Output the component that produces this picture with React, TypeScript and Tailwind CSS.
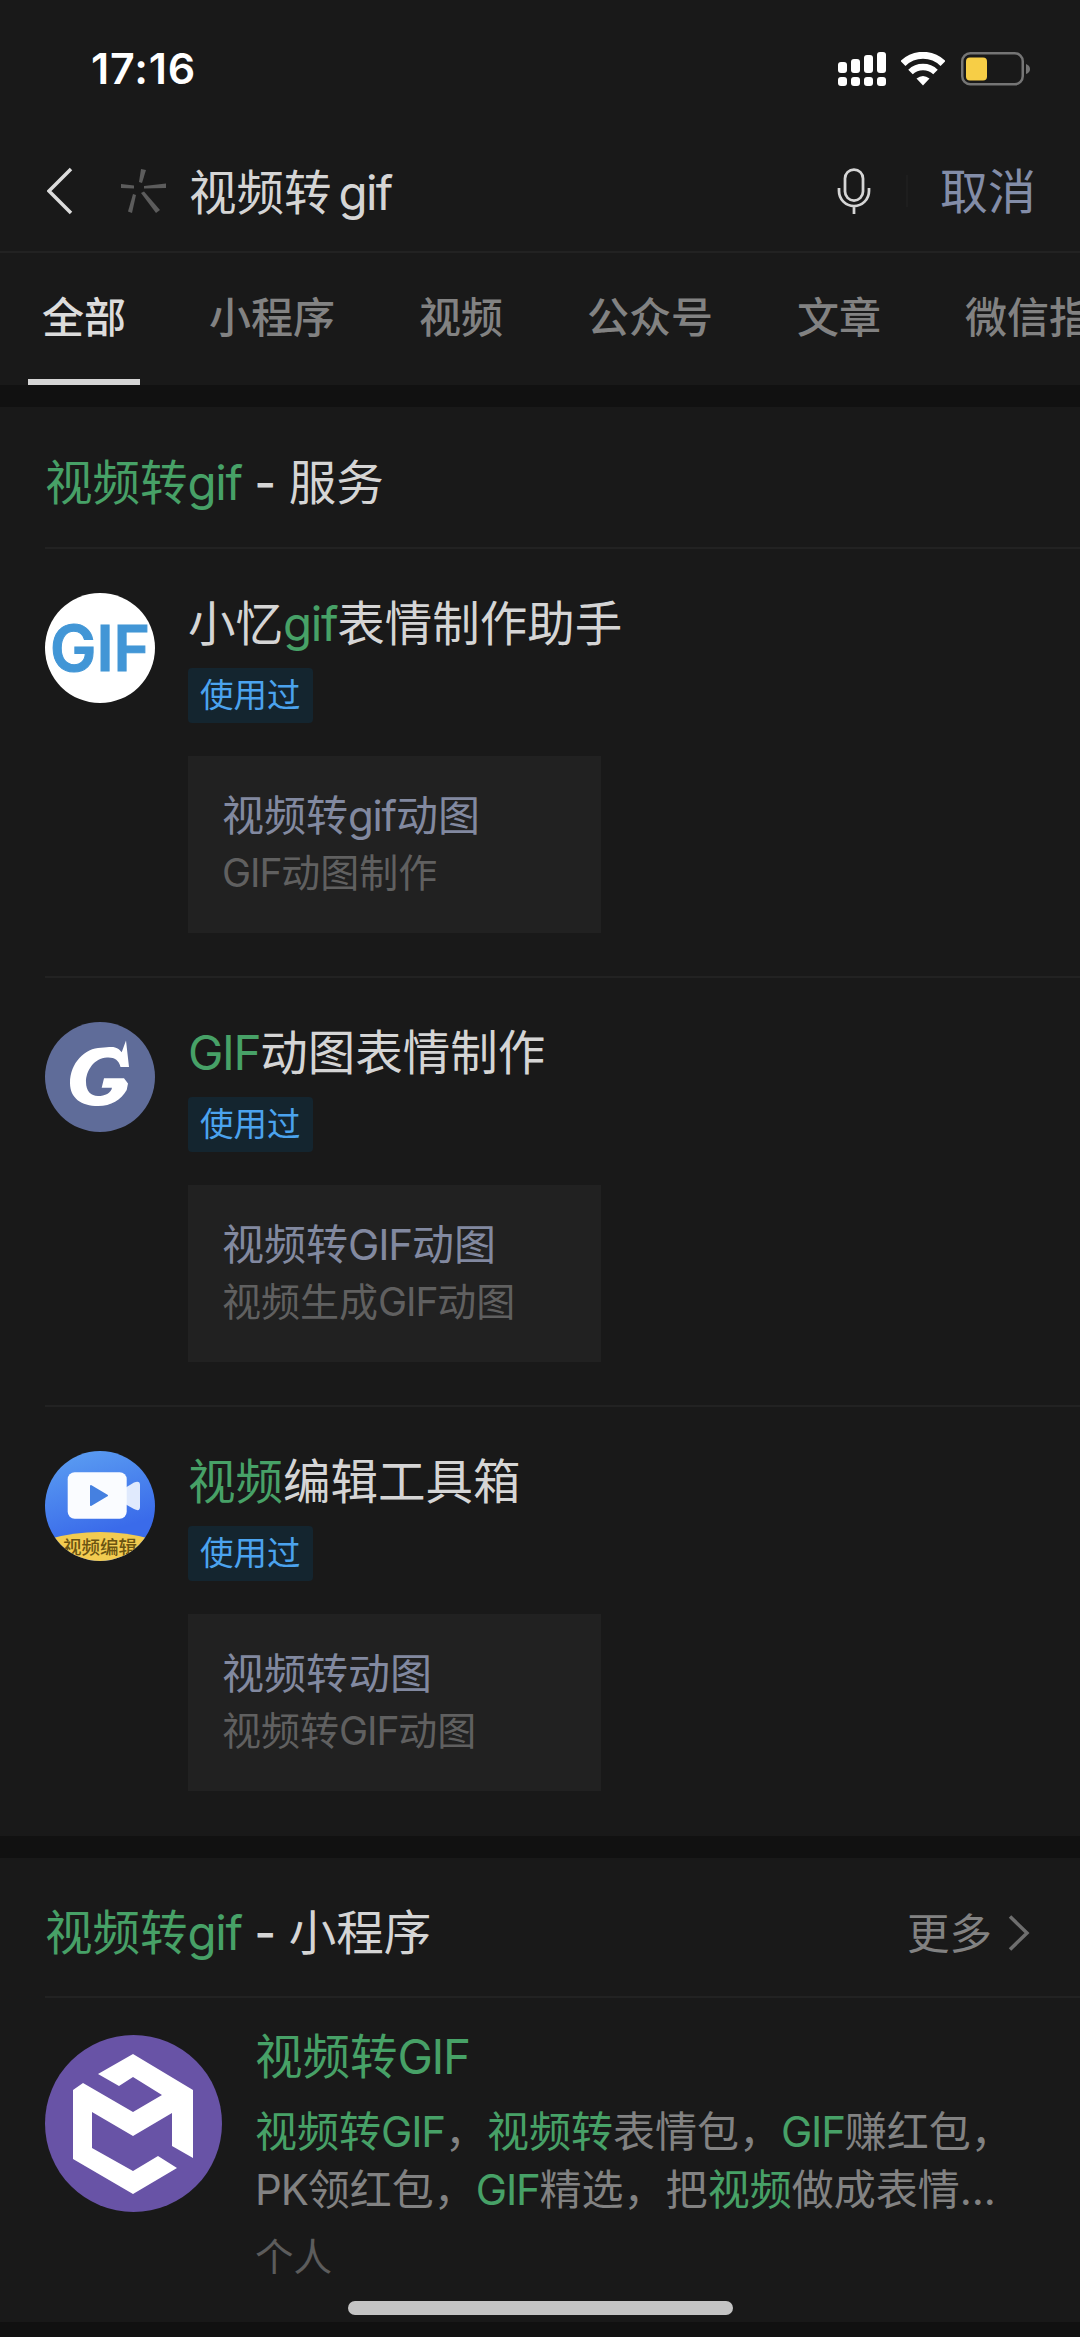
import type { ReactNode } from "react";

type Part = { text: string; hit?: boolean };

type Service = {
  id: string;
  icon: ReactNode;
  title: Part[];
  entry: string;
  entryDesc: string;
};

function GifIcon() {
  return (
    <svg viewBox="0 0 110 110" className="h-[110px] w-[110px] shrink-0">
      <circle cx="55" cy="55" r="55" fill="#fff" />
      <text x="55" y="77.500" textAnchor="middle" textLength="100" lengthAdjust="spacingAndGlyphs" fontSize="63" fontWeight="600" fill="#4296d6" stroke="#4296d6" fontFamily="Inter, sans-serif">
        GIF
      </text>
    </svg>
  );
}

function GIcon() {
  return (
    <svg viewBox="0 0 110 110" className="h-[110px] w-[110px] shrink-0">
      <circle cx="55" cy="55" r="55" fill="#5f6c99" />
      <path d="M81 18.500 L84 45 L75.500 45 C74 38 69 35 62 35.500 C49 36 41 49 41 60 C41 69 46 74 53 74 C60 74 66 71 67 65.700 L56.700 65.700 L59 56.300 L79 56.300 L83 61.500 L81.700 68 C76 78 66 84 53.300 84 C36 84 25 76 25 61 C25 41 40 25.700 56 25.700 C62 25.700 66 24.500 70 25.500 C73 26 75 28 76.700 30.300 Z" fill="#fff" />
    </svg>
  );
}

function VideoIcon() {
  return (
    <svg viewBox="0 0 110 110" className="h-[110px] w-[110px] shrink-0">
      <defs>
        <linearGradient id="sky" x1="0.1" y1="0" x2="0.4" y2="1">
          <stop offset="0" stopColor="#5c9ff2" />
          <stop offset="0.8" stopColor="#3a6bea" />
        </linearGradient>
        <clipPath id="round">
          <circle cx="55" cy="55" r="55" />
        </clipPath>
      </defs>
      <g clipPath="url(#round)">
        <rect width="110" height="110" fill="url(#sky)" />
        <path d="M0 89 Q55 73 110 89 V110 H0 Z" fill="#f2cb50" />
        <path d="M80 37 L89 31.500 Q95 29 95 34 V56 Q95 61 89 58 L80 53 Z" fill="#e0eafd" />
        <rect x="22.700" y="21.300" width="59" height="46.400" rx="7" fill="#fafcff" />
        <path d="M46 35 L62 44.500 L46 54 Z" fill="#4580e0" stroke="#4580e0" strokeWidth="2" strokeLinejoin="round" />
        <text x="55" y="103" textAnchor="middle" fontSize="18.500" fontWeight="500" fill="#6b5412" fontFamily="Noto Sans CJK SC, sans-serif">
          视频编辑
        </text>
      </g>
    </svg>
  );
}

function CubeIcon() {
  return (
    <svg viewBox="0 0 177 177" className="h-[177px] w-[177px] shrink-0">
      <circle cx="88.500" cy="88.500" r="88.500" fill="#6853a6" />
      <path d="M88 19 L148 55 V123 L127 111 V78 L88 101 L47 77 V113 L88 136 L113 121 L132 133 L88 159 L28 124 V55 L38 48 L88 77 L117 60 L88 42 L74 51 L53 39 Z" fill="#fff" />
    </svg>
  );
}

const services: Service[] = [
  {
    id: "xiaoyi",
    icon: <GifIcon />,
    title: [{ text: "小忆" }, { text: "gif", hit: true }, { text: "表情制作助手" }],
    entry: "视频转gif动图",
    entryDesc: "GIF动图制作",
  },
  {
    id: "gif-maker",
    icon: <GIcon />,
    title: [{ text: "GIF", hit: true }, { text: "动图表情制作" }],
    entry: "视频转GIF动图",
    entryDesc: "视频生成GIF动图",
  },
  {
    id: "toolbox",
    icon: <VideoIcon />,
    title: [{ text: "视频", hit: true }, { text: "编辑工具箱" }],
    entry: "视频转动图",
    entryDesc: "视频转GIF动图",
  },
];

const tabs = ["全部", "小程序", "视频", "公众号", "文章", "微信指数"];

const summary: Part[][] = [
  [
    { text: "视频转GIF", hit: true },
    { text: "，" },
    { text: "视频转", hit: true },
    { text: "表情包，" },
    { text: "GIF", hit: true },
    { text: "赚红包，" },
  ],
  [
    { text: "PK领红包，" },
    { text: "GIF", hit: true },
    { text: "精选，把" },
    { text: "视频", hit: true },
    { text: "做成表情..." },
  ],
];

// Latin runs are set a little tighter than the Chinese around them
function Mixed({ children }: { children: string }) {
  return (
    <>
      {children.split(/([A-Za-z]+)/).map((run, index) =>
        index % 2 ? (
          <span key={index} className="tracking-[-0.028em]">
            {run}
          </span>
        ) : (
          run
        )
      )}
    </>
  );
}

function Highlight({ parts }: { parts: Part[] }) {
  return (
    <>
      {parts.map((part, index) => (
        <span key={index} className={part.hit ? "text-[#47a167]" : ""}>
          <Mixed>{part.text}</Mixed>
        </span>
      ))}
    </>
  );
}

function StatusBar() {
  return (
    <div className="flex h-[137px] items-center justify-between pl-[91px] pr-[49px]">
      <span className="text-[43px] font-semibold leading-none tracking-[0.02em] text-white">17:16</span>
      <div className="flex items-center">
        <svg viewBox="0 0 48 36" className="h-9 w-12" fill="#fff">
          <rect x="0" y="11" width="9" height="11" rx="3" />
          <rect x="13" y="8" width="9" height="14" rx="3" />
          <rect x="26" y="4" width="9" height="18" rx="3" />
          <rect x="39" y="1" width="9" height="21" rx="3" />
          <rect x="0" y="26" width="9" height="9" rx="3" />
          <rect x="13" y="26" width="9" height="9" rx="3" />
          <rect x="26" y="26" width="9" height="9" rx="3" />
          <rect x="39" y="26" width="9" height="9" rx="3" />
        </svg>
        <svg viewBox="0 0 44 34" className="ml-[15px] h-[34px] w-11" fill="none" stroke="#fff">
          <path d="M2 11.500 A28.500 28.500 0 0 1 42 11.500" strokeWidth="7" />
          <path d="M9.500 20 A18 18 0 0 1 34.500 20" strokeWidth="6.500" />
          <path d="M22 33.500 L15.500 26.500 Q22 21.500 28.500 26.500 Z" fill="#fff" stroke="none" />
        </svg>
        <svg viewBox="0 0 70 34" className="ml-4 h-[34px] w-[70px]">
          <rect x="1.250" y="1.250" width="60.500" height="31" rx="8" fill="none" stroke="#757575" strokeWidth="2.500" />
          <rect x="5" y="5.500" width="21" height="23" rx="4" fill="#f7ce46" />
          <path d="M65 12 Q69 13.500 69 17 Q69 20.500 65 22 Z" fill="#757575" />
        </svg>
      </div>
    </div>
  );
}

function SearchBar() {
  return (
    <div className="flex h-[116px] items-center border-b-2 border-[#222] pb-[6px]">
      <svg viewBox="0 0 26 48" className="ml-[47px] h-12 w-[26px]" fill="none" stroke="#dcdcdc" strokeWidth="3.500">
        <path d="M24 2 L2 24 L24 46" />
      </svg>
      <svg viewBox="0 0 46 46" className="ml-12 h-[46px] w-[46px]" fill="#5c5c5c">
        <path d="M20 1 L25 2 L21 15 L18 14 Z" />
        <path d="M0 16 L13 17.500 L13 20.500 L0 20 Z" />
        <path d="M23 18 L45 15.500 L45 20 L23 20.500 Z" />
        <path d="M12 26 L15 27 L11 45 L7 43.500 Z" />
        <path d="M20 25 L23 23.500 L39 42 L35 45 Z" />
      </svg>
      <div className="ml-[22px] flex flex-1 gap-[7px] pt-1 text-[47.500px] leading-none text-[#d5d5d5]">
        <span>视频转</span>
        <span className="tracking-[-0.035em]">gif</span>
      </div>
      <svg viewBox="0 0 34 46" className="h-[46px] w-[34px]" fill="none" stroke="#d5d5d5" strokeWidth="2.750">
        <rect x="8" y="1.500" width="18" height="31" rx="9" />
        <path d="M2 20 V23 A15 15 0 0 0 32 23 V20 M17 38 V46" />
      </svg>
      <div className="ml-[35px] h-8 w-0.5 bg-[#1e1e1e]" />
      <div className="ml-8 mr-[44px] pt-0.5 text-[48px] leading-none text-[#838da8]">取消</div>
    </div>
  );
}

function Tabs() {
  return (
    <div className="flex h-[132px] gap-[84px] overflow-hidden pl-[28px] text-[42px] font-medium leading-[60px]">
      {tabs.map((tab, index) => (
        <div
          key={tab}
          className={
            index === 0
              ? "-mr-[15px] shrink-0 border-b-[6px] border-[#d5d5d5] px-[14px] pt-[35px] text-[#dcdcdc]"
              : "shrink-0 pt-[35px] text-[#828282]"
          }
        >
          {tab}
        </div>
      ))}
    </div>
  );
}

function SectionTitle({ name, more }: { name: string; more?: boolean }) {
  return (
    <div
      className={
        more
          ? "ml-[45px] flex h-[140px] items-center border-b-2 border-[#222] pt-3 text-[47.500px] text-[#d5d5d5]"
          : "ml-[45px] flex h-[142px] items-center border-b-2 border-[#222] pt-3 text-[47.500px] text-[#d5d5d5]"
      }
    >
      <h2 className="flex flex-1 leading-none">
        <span className="text-[#47a167]">
          <Mixed>视频转gif</Mixed>
        </span>
        <span className="w-[47px] text-center font-medium">-</span>
        <span>{name}</span>
      </h2>
      {more && (
        <div className="flex items-center pr-[50px] text-[#828282]">
          <span className="pt-0.5 text-[42.500px] leading-none">更多</span>
          <svg viewBox="0 0 22 36" className="ml-[16px] h-9 w-[22px]" fill="none" stroke="#6e6e6e" strokeWidth="3.500">
            <path d="M2 1.500 L19 18 L2 34.500" />
          </svg>
        </div>
      )}
    </div>
  );
}

function ServiceItem({ service, last }: { service: Service; last: boolean }) {
  return (
    <div className={last ? "ml-[45px] flex h-[429px] pt-[44px]" : "ml-[45px] flex h-[429px] border-b-2 border-[#222] pt-[44px]"}>
      {service.icon}
      <div className="ml-[33px] flex flex-col items-start">
        <h3 className="pt-px text-[47.500px] leading-[60px] text-[#d5d5d5]">
          <Highlight parts={service.title} />
        </h3>
        <span className="mt-[14px] h-[55px] rounded-sm bg-[#14252f] px-3 text-[33.500px] leading-[54px] text-[#4ba3ee]">使用过</span>
        <div className="mt-[33px] h-[177px] w-[413px] bg-[#212121] pl-[34px] pt-[31px]">
          <div className="text-[42px] leading-[58px] text-[#8289a0]">
            <Mixed>{service.entry}</Mixed>
          </div>
          <div className="text-[39px] leading-[56px] text-[#606060]">
            <Mixed>{service.entryDesc}</Mixed>
          </div>
        </div>
      </div>
    </div>
  );
}

export default function App() {
  return (
    <div className="relative h-[2337px] w-[1080px] overflow-hidden bg-[#191919] font-[Inter,'Noto_Sans_CJK_SC',sans-serif]">
      <StatusBar />
      <SearchBar />
      <Tabs />
      <div className="h-[22px] bg-[#111]" />

      <section>
        <SectionTitle name="服务" />
        {services.map((service, index) => (
          <ServiceItem key={service.id} service={service} last={index === services.length - 1} />
        ))}
      </section>
      <div className="h-[22px] bg-[#111]" />

      <section className="h-[464px]">
        <SectionTitle name="小程序" more />
        <div className="ml-[45px] flex pt-[37px]">
          <CubeIcon />
          <div className="ml-[33px] whitespace-nowrap">
            <h3 className="-mt-0.5 text-[47.500px] leading-[48px] text-[#47a167]">
              <Mixed>视频转GIF</Mixed>
            </h3>
            <div className="mt-[22px] text-[42px] leading-[58px] text-[#828282]">
              {summary.map((line, index) => (
                <p key={index}>
                  <Highlight parts={line} />
                </p>
              ))}
            </div>
            <p className="mt-2 text-[38.500px] leading-[60px] text-[#5c5c5c]">个人</p>
          </div>
        </div>
      </section>
      <div className="h-[15px] bg-[#111]" />

      {/* home indicator */}
      <div className="absolute bottom-[22px] left-[348px] h-[14px] w-[385px] rounded-full bg-[#c4c4c4]" />
    </div>
  );
}
